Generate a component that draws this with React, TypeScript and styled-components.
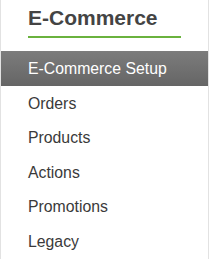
import styled, { createGlobalStyle } from "styled-components";

const GlobalStyle = createGlobalStyle`
  body {
    margin: 0;
    background: #ffffff;
  }
`;

const items = ["E-Commerce Setup", "Orders", "Products", "Actions", "Promotions", "Legacy"];

const App = () => {
  return (
    <>
      <GlobalStyle />
      <SSidebar>
        <SHeader>
          <h2>E-Commerce</h2>
        </SHeader>
        <SMenu>
          {items.map((label, idx) => (
            <SItem key={label} $active={idx === 0}>
              {label}
            </SItem>
          ))}
        </SMenu>
      </SSidebar>
    </>
  );
};
export default App;

const SSidebar = styled.div`
  width: 207px;
  height: 259px;
  border-left: 1px solid #e2e2e2;
  border-right: 1px solid #e2e2e2;
  background: #ffffff;
  font-family: "Liberation Sans", Arial, sans-serif;
`;

const SHeader = styled.div`
  padding: 6px 0 13px 27px;

  & h2 {
    width: 153px;
    margin: 0;
    padding-bottom: 6px;
    font-size: 21px;
    line-height: 24px;
    font-weight: bold;
    color: #444444;
    border-bottom: 2px solid #6ab23e;
  }
`;

const SMenu = styled.ul`
  list-style: none;
  margin: 0;
  padding: 0;
`;

const SItem = styled.li<{ $active?: boolean }>`
  box-sizing: border-box;
  display: flex;
  align-items: center;
  height: ${(p) => (p.$active ? "35px" : "34.4px")};
  padding: ${(p) => (p.$active ? "0" : "1.5px")} 0 0 27px;
  font-size: 15.8px;
  color: ${(p) => (p.$active ? "#ffffff" : "#3a3a3a")};
  background: ${(p) => (p.$active ? "linear-gradient(#7c7c7c, #656565)" : "transparent")};
`;
